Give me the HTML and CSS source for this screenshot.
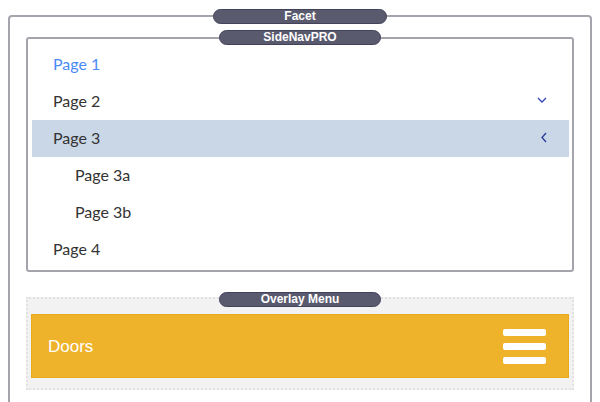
FILE: index.html
```html
<!DOCTYPE html>
<html lang="en">
<head>
    <meta charset="UTF-8">
    <meta name="viewport" content="width=device-width, initial-scale=1.0">
    <title>Facet</title>
    <link rel="stylesheet" href="styles.css">
</head>
<body>
    <div class="facet">
        <span class="tag tag-wide">Facet</span>

        <div class="sidenav">
            <span class="tag">SideNavPRO</span>
            <ul class="nav">
                <li class="active">Page 1</li>
                <li>Page 2
                    <svg class="chev" width="10" height="6" viewBox="0 0 10 6"><path d="M1 1l4 4 4-4" fill="none" stroke="#3344bb" stroke-width="1.3"/></svg>
                </li>
                <li class="open">Page 3
                    <svg class="chev" width="6" height="11" viewBox="0 0 6 11"><path d="M5 1L1 5.5 5 10" fill="none" stroke="#2a3a9c" stroke-width="1.3"/></svg>
                </li>
                <li class="sub">Page 3a</li>
                <li class="sub">Page 3b</li>
                <li>Page 4</li>
            </ul>
        </div>

        <div class="overlay">
            <span class="tag tag-low">Overlay Menu</span>
            <div class="bar">
                <span class="title">Doors</span>
                <div class="burger">
                    <span></span>
                    <span></span>
                    <span></span>
                </div>
            </div>
        </div>
    </div>
</body>
</html>
```

FILE: styles.css
```css
body{
    margin: 0;
    padding: 15px 8px 0;
    background: #fff;
    font-family: "Lato", "Liberation Sans", sans-serif;
}
.facet{
    position: relative;
    border: 2px solid #a4a4ac;
    border-radius: 4px;
    padding: 20px 16px 40px;
}
.tag{
    position: absolute;
    top: -9px;
    left: 50%;
    width: 160px;
    margin-left: -81px;
    height: 13px;
    line-height: 13px;
    background: #5a5a6f;
    border: 1px solid #42425a;
    border-radius: 8px;
    color: #fff;
    font-family: "Liberation Sans", Arial, sans-serif;
    font-weight: bold;
    font-size: 12px;
    text-align: center;
}
.tag-wide{
    width: 172px;
    margin-left: -87px;
    top: -8px;
}
.tag-low{
    top: -7px;
}
.sidenav{
    position: relative;
    border: 2px solid #a4a4ac;
    border-radius: 3px;
    padding: 7px 3px 2px 4px;
}
.nav{
    list-style: none;
    margin: 0;
    padding: 0;
}
.nav li{
    box-sizing: border-box;
    height: 37px;
    display: flex;
    align-items: center;
    justify-content: space-between;
    padding: 0 22px 3px 21px;
    font-size: 16px;
    color: #333;
}
.nav li.active{
    color: #4a8af4;
}
.nav li.open{
    background: #cad7e6;
}
.nav li.sub{
    padding-left: 43px;
}
.overlay{
    position: relative;
    margin-top: 25px;
    background: #f2f2f2;
    border: 2px dotted #e2e2e2;
    padding: 15px 3px 10px 3px;
}
.bar{
    display: flex;
    align-items: center;
    justify-content: space-between;
    height: 62px;
    background: #eeb32b;
    border: 1px solid #e9aa1e;
    padding: 0 22px 0 16px;
}
.title{
    color: #fff;
    font-family: "Liberation Sans", Arial, sans-serif;
    font-size: 17px;
    font-weight: 300;
    padding-top: 2px;
}
.burger{
    display: flex;
    flex-direction: column;
    gap: 7px;
}
.burger span{
    display: block;
    width: 43px;
    height: 7px;
    background: #fff;
    border-radius: 2px;
}
```
